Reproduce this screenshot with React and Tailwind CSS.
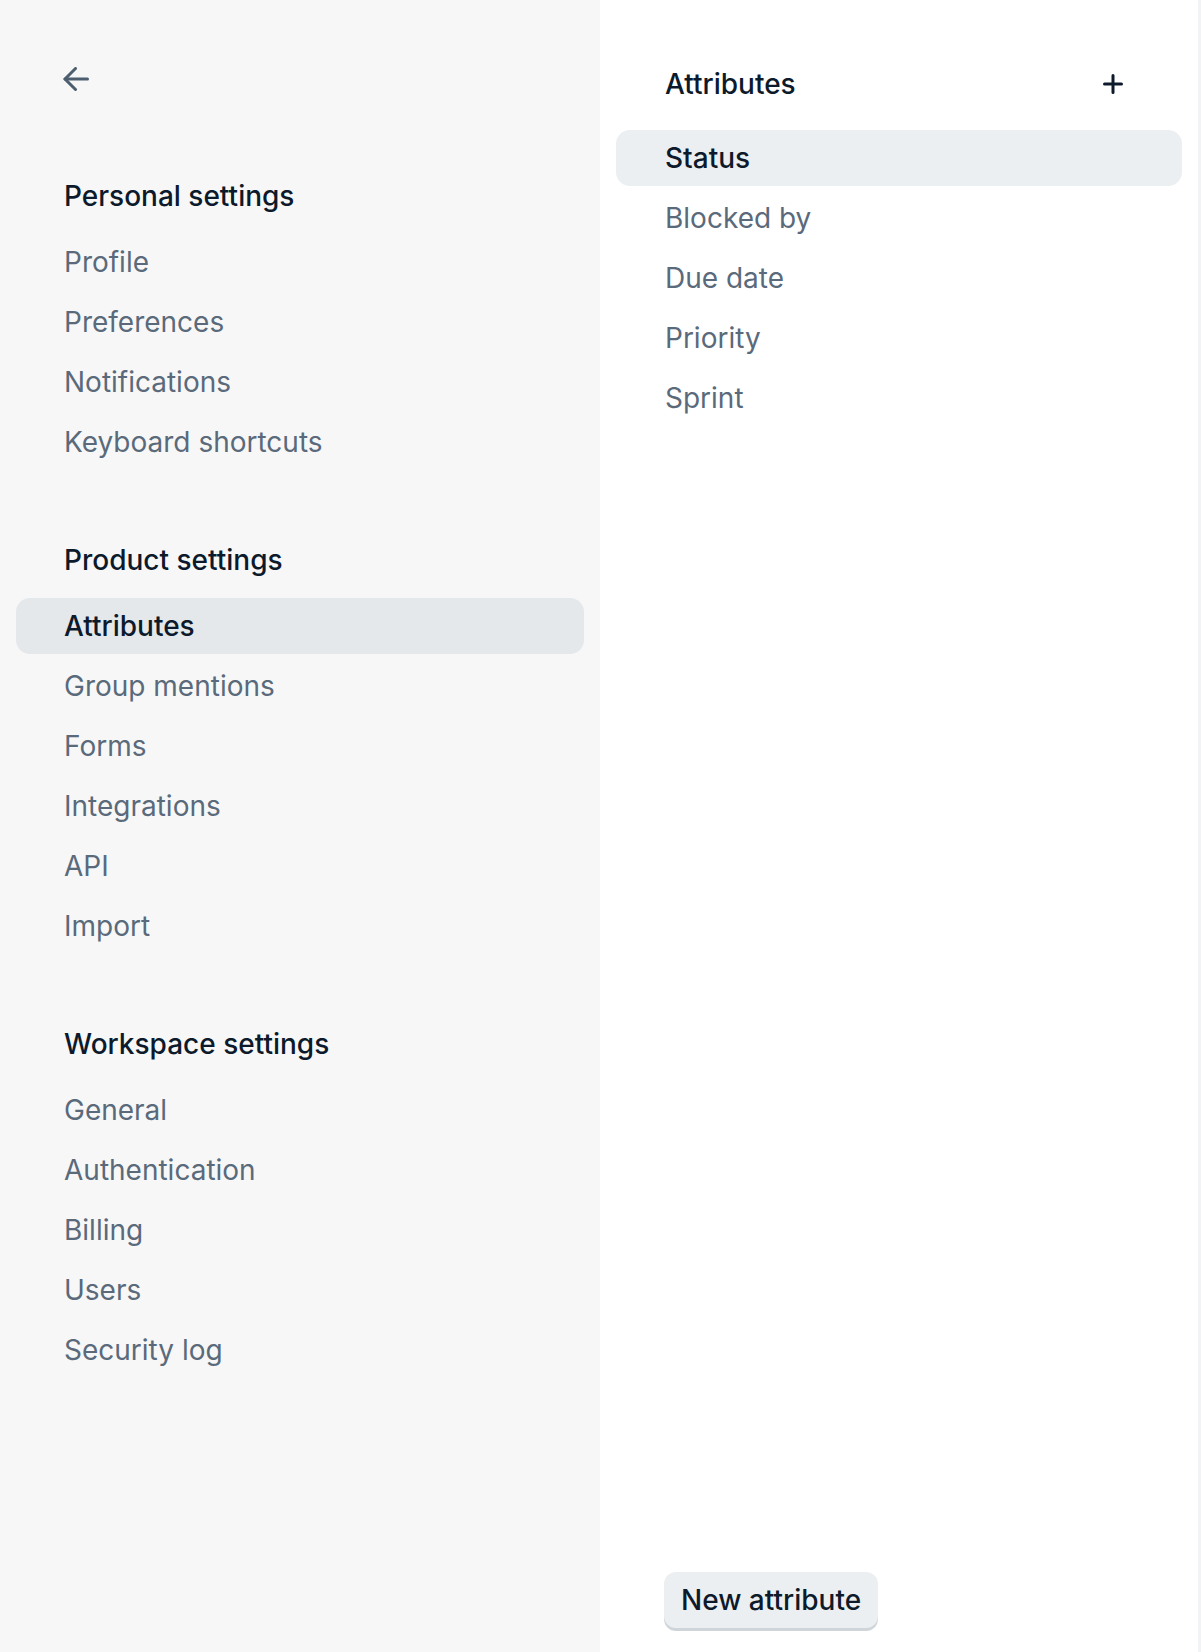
import React from "react";

const sections = [
  {
    title: "Personal settings",
    items: ["Profile", "Preferences", "Notifications", "Keyboard shortcuts"],
  },
  {
    title: "Product settings",
    items: ["Attributes", "Group mentions", "Forms", "Integrations", "API", "Import"],
    active: "Attributes",
  },
  {
    title: "Workspace settings",
    items: ["General", "Authentication", "Billing", "Users", "Security log"],
  },
];

const attrs = ["Status", "Blocked by", "Due date", "Priority", "Sprint"];

export default function App() {
  return (
    <div
      className="flex h-[1652px] w-[1201px] overflow-hidden bg-white"
      style={{ fontFamily: "Inter, 'Noto Sans', sans-serif" }}
    >
      {/* Sidebar */}
      <aside className="flex w-[600px] shrink-0 flex-col bg-[#f7f7f7] px-[16px]">
        <div className="pl-[47px] pt-[67px]">
          <svg width="26" height="24" viewBox="0 0 26 24" fill="none" stroke="#4d5e6f" strokeWidth="3" strokeLinecap="round" strokeLinejoin="round">
            <path d="M24.5 12H2" />
            <path d="M12.5 1.5 2 12l10.5 10.5" />
          </svg>
        </div>
        <div className="mt-[77px] flex flex-col gap-[62px]">
          {sections.map((s) => (
            <div key={s.title} className="flex flex-col">
              <div className="flex h-[56px] items-center pl-[48px] text-[28px] font-medium leading-none text-[#0c1a2b]">
                {s.title}
              </div>
              <div className="mt-[10px] flex flex-col gap-[4px]">
                {s.items.map((it) => {
                  const active = it === s.active;
                  return (
                    <div
                      key={it}
                      className={
                        active
                          ? "flex h-[56px] items-center rounded-[14px] bg-[#e5e8eb] pl-[48px] text-[28px] font-medium leading-none text-[#0c1a2b]"
                          : "flex h-[56px] items-center rounded-[14px] pl-[48px] text-[28px] leading-none text-[#5a6a7b]"
                      }
                    >
                      {it}
                    </div>
                  );
                })}
              </div>
            </div>
          ))}
        </div>
      </aside>

      {/* Main */}
      <main className="flex flex-1 flex-col px-[16px] pb-[24px]">
        <div className="mt-[56px] flex h-[56px] items-center justify-between pl-[49px] pr-[59px]">
          <span className="text-[28px] font-medium leading-none text-[#0c1a2b]">Attributes</span>
          <svg width="20" height="20" viewBox="0 0 20 20" fill="none" stroke="#0c1a2b" strokeWidth="3" strokeLinecap="round">
            <path d="M10 1.5v17M1.5 10h17" />
          </svg>
        </div>
        <div className="mt-[18px] flex flex-col gap-[4px]">
          {attrs.map((a, i) => (
            <div
              key={a}
              className={
                i === 0
                  ? "flex h-[56px] items-center rounded-[14px] bg-[#eceff1] pl-[49px] text-[28px] font-medium leading-none text-[#0c1a2b]"
                  : "flex h-[56px] items-center rounded-[14px] pl-[49px] text-[28px] leading-none text-[#5a6a7b]"
              }
            >
              {a}
            </div>
          ))}
        </div>
        <div className="mt-auto pl-[48px]">
          <button className="flex h-[56px] items-center rounded-[12px] bg-[#eceff1] px-[17px] text-[28px] font-medium leading-none text-[#0c1a2b] shadow-[0_3px_0_#d0d5da]">
            New attribute
          </button>
        </div>
      </main>
      <div className="w-[3px] shrink-0 bg-[#f2f3f4]" />
    </div>
  );
}
